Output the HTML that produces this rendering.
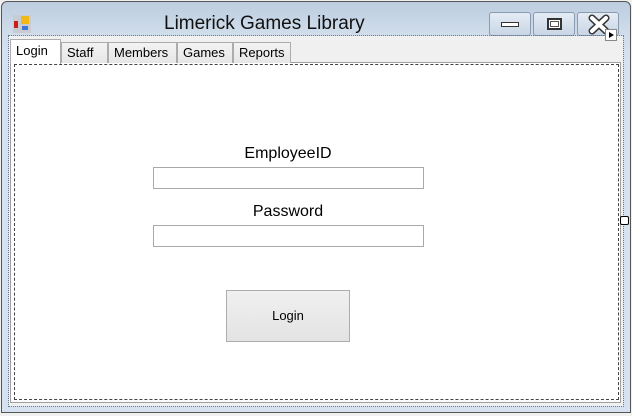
<!DOCTYPE html>
<html><head><style>
*{margin:0;padding:0;box-sizing:border-box}
body{width:632px;height:416px;background:#f0f0f0;position:relative;overflow:hidden;font-family:"Liberation Sans",sans-serif}
.win{position:absolute;left:1px;top:1px;width:630px;height:412px;border:1px solid #555;border-radius:6px 6px 0 0;background:linear-gradient(#bccddf 0,#cfdcea 30px,#d6e2ef 60px,#d6e2ef 100%)}
.dot{position:absolute;left:8px;top:35px;width:616px;height:372px;border:1px dotted #6a7a90}
.client{position:absolute;left:9px;top:36px;width:614px;height:370px;background:#f0f0f0}
.tabc{position:absolute;left:10px;top:62px;width:611px;height:341px;border:1px solid #a0a0a0;background:#fff}
.page{position:absolute;left:14px;top:64px;width:605px;height:336px;border:1px dashed #444}
.tab{position:absolute;top:42px;height:21px;border:1px solid #acacac;border-bottom:none;background:linear-gradient(#f3f3f3,#e6e6e6);font-size:13px;color:#000;padding-left:5px;line-height:19px}
.tab.sel{top:39px;height:25px;background:#fff;line-height:22px;z-index:2}
.title{position:absolute;left:164px;top:13px;color:#111;font-family:"Liberation Sans",sans-serif;font-size:19px}
.btn{position:absolute;top:12px;height:24px;border:1px solid #8a9ab0;border-radius:3px;background:linear-gradient(#e4ecf5,#c9d6e5)}
.lbl{position:absolute;font-size:16px;color:#000;width:200px;text-align:center;left:188px}
.tb{position:absolute;left:153px;width:271px;height:22px;border:1px solid #a9a9a9;background:#fff}
.lb{position:absolute;left:226px;top:290px;width:124px;height:52px;border:1px solid #adadad;background:linear-gradient(#f0f0f0,#e3e3e3);font-size:13px;text-align:center;line-height:50px}
</style></head><body>
<div class="win"></div>
<div style="position:absolute;left:13px;top:15px;width:18px;height:18px;background:#c8ccd2">
<div style="position:absolute;left:1px;top:6px;width:4px;height:7px;background:#c8201a"></div>
<div style="position:absolute;left:8px;top:1px;width:8px;height:8px;background:#f2b818"></div>
<div style="position:absolute;left:9px;top:11px;width:6px;height:4px;background:#3a78d8"></div>
</div>
<div class="title">Limerick Games Library</div>
<div class="btn" style="left:489px;width:42px"><div style="position:absolute;left:11px;top:9px;width:18px;height:5px;border:1px solid #333;background:#fff"></div></div>
<div class="btn" style="left:533px;width:42px"><div style="position:absolute;left:13px;top:5px;width:15px;height:12px;border:2px solid #333;background:#fff"><div style="margin:1px;height:6px;border:1px solid #555"></div></div></div>
<div class="btn" style="left:577px;width:42px"><svg width="42" height="24" style="position:absolute;left:0;top:0"><path d="M14 5L28 18M28 5L14 18" stroke="#333" stroke-width="7" stroke-linecap="round"/><path d="M14 5L28 18M28 5L14 18" stroke="#fff" stroke-width="4" stroke-linecap="round"/></svg></div>
<div class="dot"></div>
<div class="client"></div>
<div class="tabc"></div>
<div class="page"></div>
<div class="tab sel" style="left:10px;width:51px">Login</div>
<div class="tab" style="left:61px;width:47px">Staff</div>
<div class="tab" style="left:108px;width:69px">Members</div>
<div class="tab" style="left:177px;width:56px">Games</div>
<div class="tab" style="left:233px;width:58px">Reports</div>
<div style="position:absolute;left:605px;top:29px;width:12px;height:12px;border:1px solid #888;background:#fff"><div style="position:absolute;left:3px;top:2px;width:0;height:0;border-left:5px solid #000;border-top:3.5px solid transparent;border-bottom:3.5px solid transparent"></div></div>
<div style="position:absolute;left:620px;top:216px;width:9px;height:9px;border:1px solid #000;background:#fff;border-radius:2px"></div>
<div class="lbl" style="top:145px">EmployeeID</div>
<div class="tb" style="top:167px"></div>
<div class="lbl" style="top:203px">Password</div>
<div class="tb" style="top:225px"></div>
<div class="lb">Login</div>
</body></html>
